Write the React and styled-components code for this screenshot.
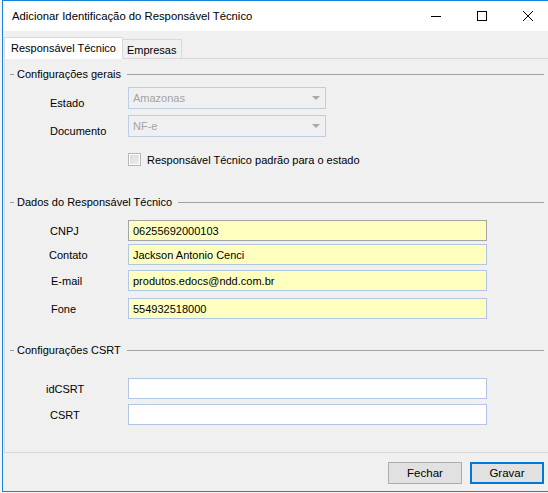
import React from 'react';
import styled, { createGlobalStyle } from 'styled-components';

const GlobalStyle = createGlobalStyle`
  html, body {
    margin: 0;
    padding: 0;
    background: #f4f4f4;
    overflow: hidden;
  }
  body {
    font-family: "Liberation Sans", Arial, sans-serif;
    font-size: 11px;
    color: #000;
  }
`;

const accent = '#1883d7';

const Window = styled.div`
  margin-left: 2px;
  width: 548px;
  height: 490px;
  border-top: 1px solid ${accent};
  border-left: 1px solid ${accent};
  border-bottom: 1px solid ${accent};
  display: flex;
  flex-direction: column;
  background: #f0f0f0;
`;

const TitleBar = styled.div`
  height: 30px;
  background: #fff;
  display: flex;
  align-items: center;
  flex-shrink: 0;
`;

const Title = styled.div`
  flex: 1;
  padding-left: 9px;
  font-size: 11.3px;
  color: #000;
`;

const CaptionButton = styled.div`
  width: 46px;
  height: 30px;
  display: flex;
  align-items: center;
  justify-content: center;
`;

const Client = styled.div`
  flex: 1;
  display: flex;
  flex-direction: column;
  padding: 6px 2px 0 1px;
`;

const TabStrip = styled.div`
  display: flex;
  align-items: flex-end;
  height: 22px;
  position: relative;
  z-index: 1;
  margin-bottom: -1px;
`;

const Tab = styled.div`
  box-sizing: border-box;
  height: ${p => (p.$active ? '22px' : '20px')};
  padding: 0 ${p => (p.$active ? '6px' : '4px')};
  display: flex;
  align-items: center;
  background: ${p => (p.$active ? '#fff' : '#f0f0f0')};
  border: 1px solid #d9d9d9;
  border-bottom: ${p => (p.$active ? '1px solid #fff' : '1px solid #d9d9d9')};
  margin-left: ${p => (p.$active ? '0' : '-1px')};
  padding-top: ${p => (p.$active ? '0' : '2px')};
  font-size: 11px;
`;

const TabPanel = styled.div`
  box-sizing: border-box;
  height: 395px;
  border: 1px solid #d9d9d9;
  background: #f0f0f0;
  padding: 8px 4px 0 5px;
  display: flex;
  flex-direction: column;
`;

const Group = styled.div`
  margin-top: ${p => p.$top || 0}px;
  display: flex;
  flex-direction: column;
`;

const GroupHeader = styled.div`
  height: 14px;
  display: flex;
  align-items: center;
  gap: 3px;
  &::before {
    content: '';
    width: 4px;
    height: 1px;
    background: #a0a0a0;
  }
  &::after {
    content: '';
    flex: 1;
    height: 1px;
    background: #a0a0a0;
    margin-left: 3px;
  }
`;

const GroupTitle = styled.span`
  font-size: 11px;
  color: #000;
`;

const Row = styled.div`
  display: flex;
  align-items: center;
  margin-top: ${p => p.$top || 0}px;
  padding-left: 40px;
`;

const Label = styled.div`
  width: ${p => 78 - (p.$shift || 0)}px;
  margin-left: ${p => p.$shift || 0}px;
  font-size: 11px;
  padding-top: ${p => p.$drop || 0}px;
`;

const Combo = styled.div`
  box-sizing: border-box;
  width: 198px;
  height: 22px;
  border: 1px solid #bccde6;
  background: #f0f0f0;
  display: flex;
  align-items: center;
  padding: 0 4px;
  color: #a3a3a3;
  font-size: 11px;
  justify-content: space-between;
`;

const Arrow = styled.span`
  width: 0;
  height: 0;
  border-left: 4px solid transparent;
  border-right: 4px solid transparent;
  border-top: 4px solid #a8a8a8;
  margin-right: 1px;
`;

const Field = styled.div`
  box-sizing: border-box;
  width: 359px;
  height: 21px;
  border: 1px solid ${p => (p.$focused ? '#a5a5a5' : '#b1c6e4')};
  background: ${p => (p.$highlight ? '#ffffc0' : '#fff')};
  display: flex;
  align-items: center;
  padding: 0 4px;
  font-size: 11px;
  color: #000;
`;

const CheckRow = styled.div`
  display: flex;
  align-items: center;
  gap: 6px;
  margin-top: ${p => p.$top || 0}px;
  padding-left: 118px;
`;

const CheckBox = styled.span`
  box-sizing: border-box;
  width: 13px;
  height: 13px;
  border: 1px solid #b7b7b7;
  background: #fff;
  padding: 1px;
  &::after {
    content: '';
    display: block;
    width: 9px;
    height: 9px;
    background: linear-gradient(135deg, #dcdcdc, #ececec);
  }
`;

const Footer = styled.div`
  flex: 1;
  display: flex;
  justify-content: flex-end;
  align-items: flex-start;
  gap: 8px;
  padding: 9px 5px 0 0;
`;

const Button = styled.div`
  box-sizing: border-box;
  width: 74px;
  height: 22px;
  background: #e1e1e1;
  border: ${p => (p.$primary ? `2px solid #0078d7` : '1px solid #adadad')};
  display: flex;
  align-items: center;
  justify-content: center;
  font-size: 11.5px;
  color: #000;
`;

const Minimize = () => (
  <svg width="12" height="12" viewBox="0 0 12 12">
    <path d="M1 6.5h10" stroke="#000" strokeWidth="1" />
  </svg>
);

const Maximize = () => (
  <svg width="12" height="12" viewBox="0 0 12 12">
    <rect x="1.5" y="1.5" width="9" height="9" fill="none" stroke="#000" strokeWidth="1" />
  </svg>
);

const Close = () => (
  <svg width="12" height="12" viewBox="0 0 12 12">
    <path d="M1 1l10 10M11 1L1 11" stroke="#000" strokeWidth="1" />
  </svg>
);

const dados = [
  { label: 'CNPJ', value: '06255692000103', top: 11, focused: true },
  { label: 'Contato', value: 'Jackson Antonio Cenci', top: 3, shift: -1 },
  { label: 'E-mail', value: 'produtos.edocs@ndd.com.br', top: 5, shift: 1 },
  { label: 'Fone', value: '554932518000', top: 7, shift: 1 },
];

export default function App() {
  return (
    <>
      <GlobalStyle />
      <Window>
        <TitleBar>
          <Title>Adicionar Identificação do Responsável Técnico</Title>
          <CaptionButton><Minimize /></CaptionButton>
          <CaptionButton><Maximize /></CaptionButton>
          <CaptionButton><Close /></CaptionButton>
        </TitleBar>
        <Client>
          <TabStrip>
            <Tab $active>Responsável Técnico</Tab>
            <Tab>Empresas</Tab>
          </TabStrip>
          <TabPanel>
            <Group>
              <GroupHeader><GroupTitle>Configurações gerais</GroupTitle></GroupHeader>
              <Row $top={6}>
                <Label $drop={10}>Estado</Label>
                <Combo>Amazonas<Arrow /></Combo>
              </Row>
              <Row $top={6}>
                <Label $drop={10}>Documento</Label>
                <Combo>NF-e<Arrow /></Combo>
              </Row>
              <CheckRow $top={16}>
                <CheckBox />
                <span>Responsável Técnico padrão para o estado</span>
              </CheckRow>
            </Group>

            <Group $top={29}>
              <GroupHeader><GroupTitle>Dados do Responsável Técnico</GroupTitle></GroupHeader>
              {dados.map(d => (
                <Row key={d.label} $top={d.top}>
                  <Label $shift={d.shift}>{d.label}</Label>
                  <Field $highlight $focused={d.focused}>{d.value}</Field>
                </Row>
              ))}
            </Group>

            <Group $top={24}>
              <GroupHeader><GroupTitle>Configurações CSRT</GroupTitle></GroupHeader>
              <Row $top={21}>
                <Label $shift={-4}>idCSRT</Label>
                <Field />
              </Row>
              <Row $top={5}>
                <Label>CSRT</Label>
                <Field />
              </Row>
            </Group>
          </TabPanel>
          <Footer>
            <Button>Fechar</Button>
            <Button $primary>Gravar</Button>
          </Footer>
        </Client>
      </Window>
    </>
  );
}
